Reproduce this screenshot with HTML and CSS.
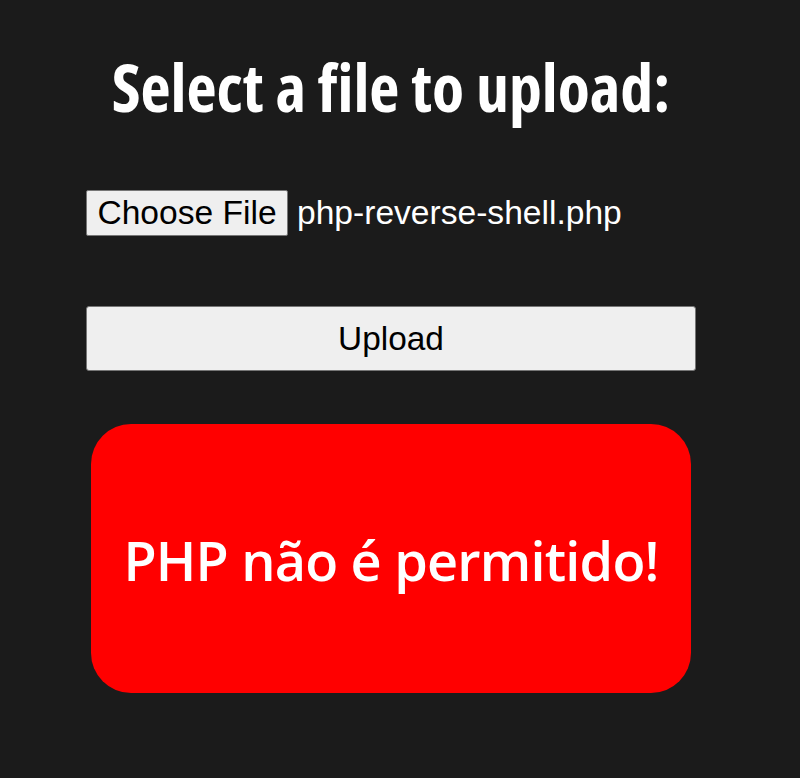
FILE: index.html
```html
<!DOCTYPE html>
<html lang="pt">
<head>
<meta charset="utf-8">
<title>Upload</title>
<link rel="stylesheet" href="styles.css">
</head>
<body>
<main class="page">
  <form class="upload-form">
    <h1 class="title">Select a file to upload:</h1>
    <div class="file-row">
      <span class="file-btn">Choose File</span>
      <span class="file-name">php-reverse-shell.php</span>
    </div>
    <button type="button" class="upload-btn">Upload</button>
  </form>
  <div class="alert">
    <p class="alert-text">PHP não é permitido!</p>
  </div>
</main>
</body>
</html>
```
FILE: styles.css
```css
html, body {
  margin: 0;
  padding: 0;
  background: #1b1b1b;
}

.page {
  width: 610px;
  margin-left: 86px;
  padding-top: 43px;
  display: flex;
  flex-direction: column;
}

.upload-form {
  display: flex;
  flex-direction: column;
}

.title {
  margin: 0;
  font-family: "Open Sans", sans-serif;
  font-stretch: condensed;
  font-weight: 700;
  font-size: 65.8px;
  line-height: 88px;
  color: #ffffff;
  text-align: center;
  white-space: nowrap;
}

.file-row {
  margin-top: 59px;
  display: flex;
  align-items: center;
  height: 46px;
  font-family: "Liberation Sans", Arial, sans-serif;
  font-size: 33.6px;
}

.file-btn {
  box-sizing: border-box;
  height: 46px;
  width: 202px;
  display: flex;
  align-items: center;
  justify-content: center;
  background: #efefef;
  color: #000;
  border: 1px solid #767676;
  border-radius: 2px;
}

.file-name {
  margin-left: 9px;
  color: #ffffff;
  white-space: nowrap;
}

.upload-btn {
  margin-top: 70px;
  box-sizing: border-box;
  width: 610px;
  height: 65px;
  padding: 0;
  background: #efefef;
  color: #000;
  border: 1px solid #767676;
  border-radius: 3px;
  font-family: "Liberation Sans", Arial, sans-serif;
  font-size: 33.4px;
}

.alert {
  margin: 53px 0 0 5px;
  width: 600px;
  height: 269px;
  background: #ff0000;
  border-radius: 40px;
  display: flex;
  align-items: center;
  justify-content: center;
}

.alert-text {
  margin: 4px 0 0;
  font-family: "Open Sans", sans-serif;
  font-weight: 600;
  font-size: 54px;
  letter-spacing: -0.8px;
  line-height: 1.2;
  color: #ffffff;
  white-space: nowrap;
}
```
